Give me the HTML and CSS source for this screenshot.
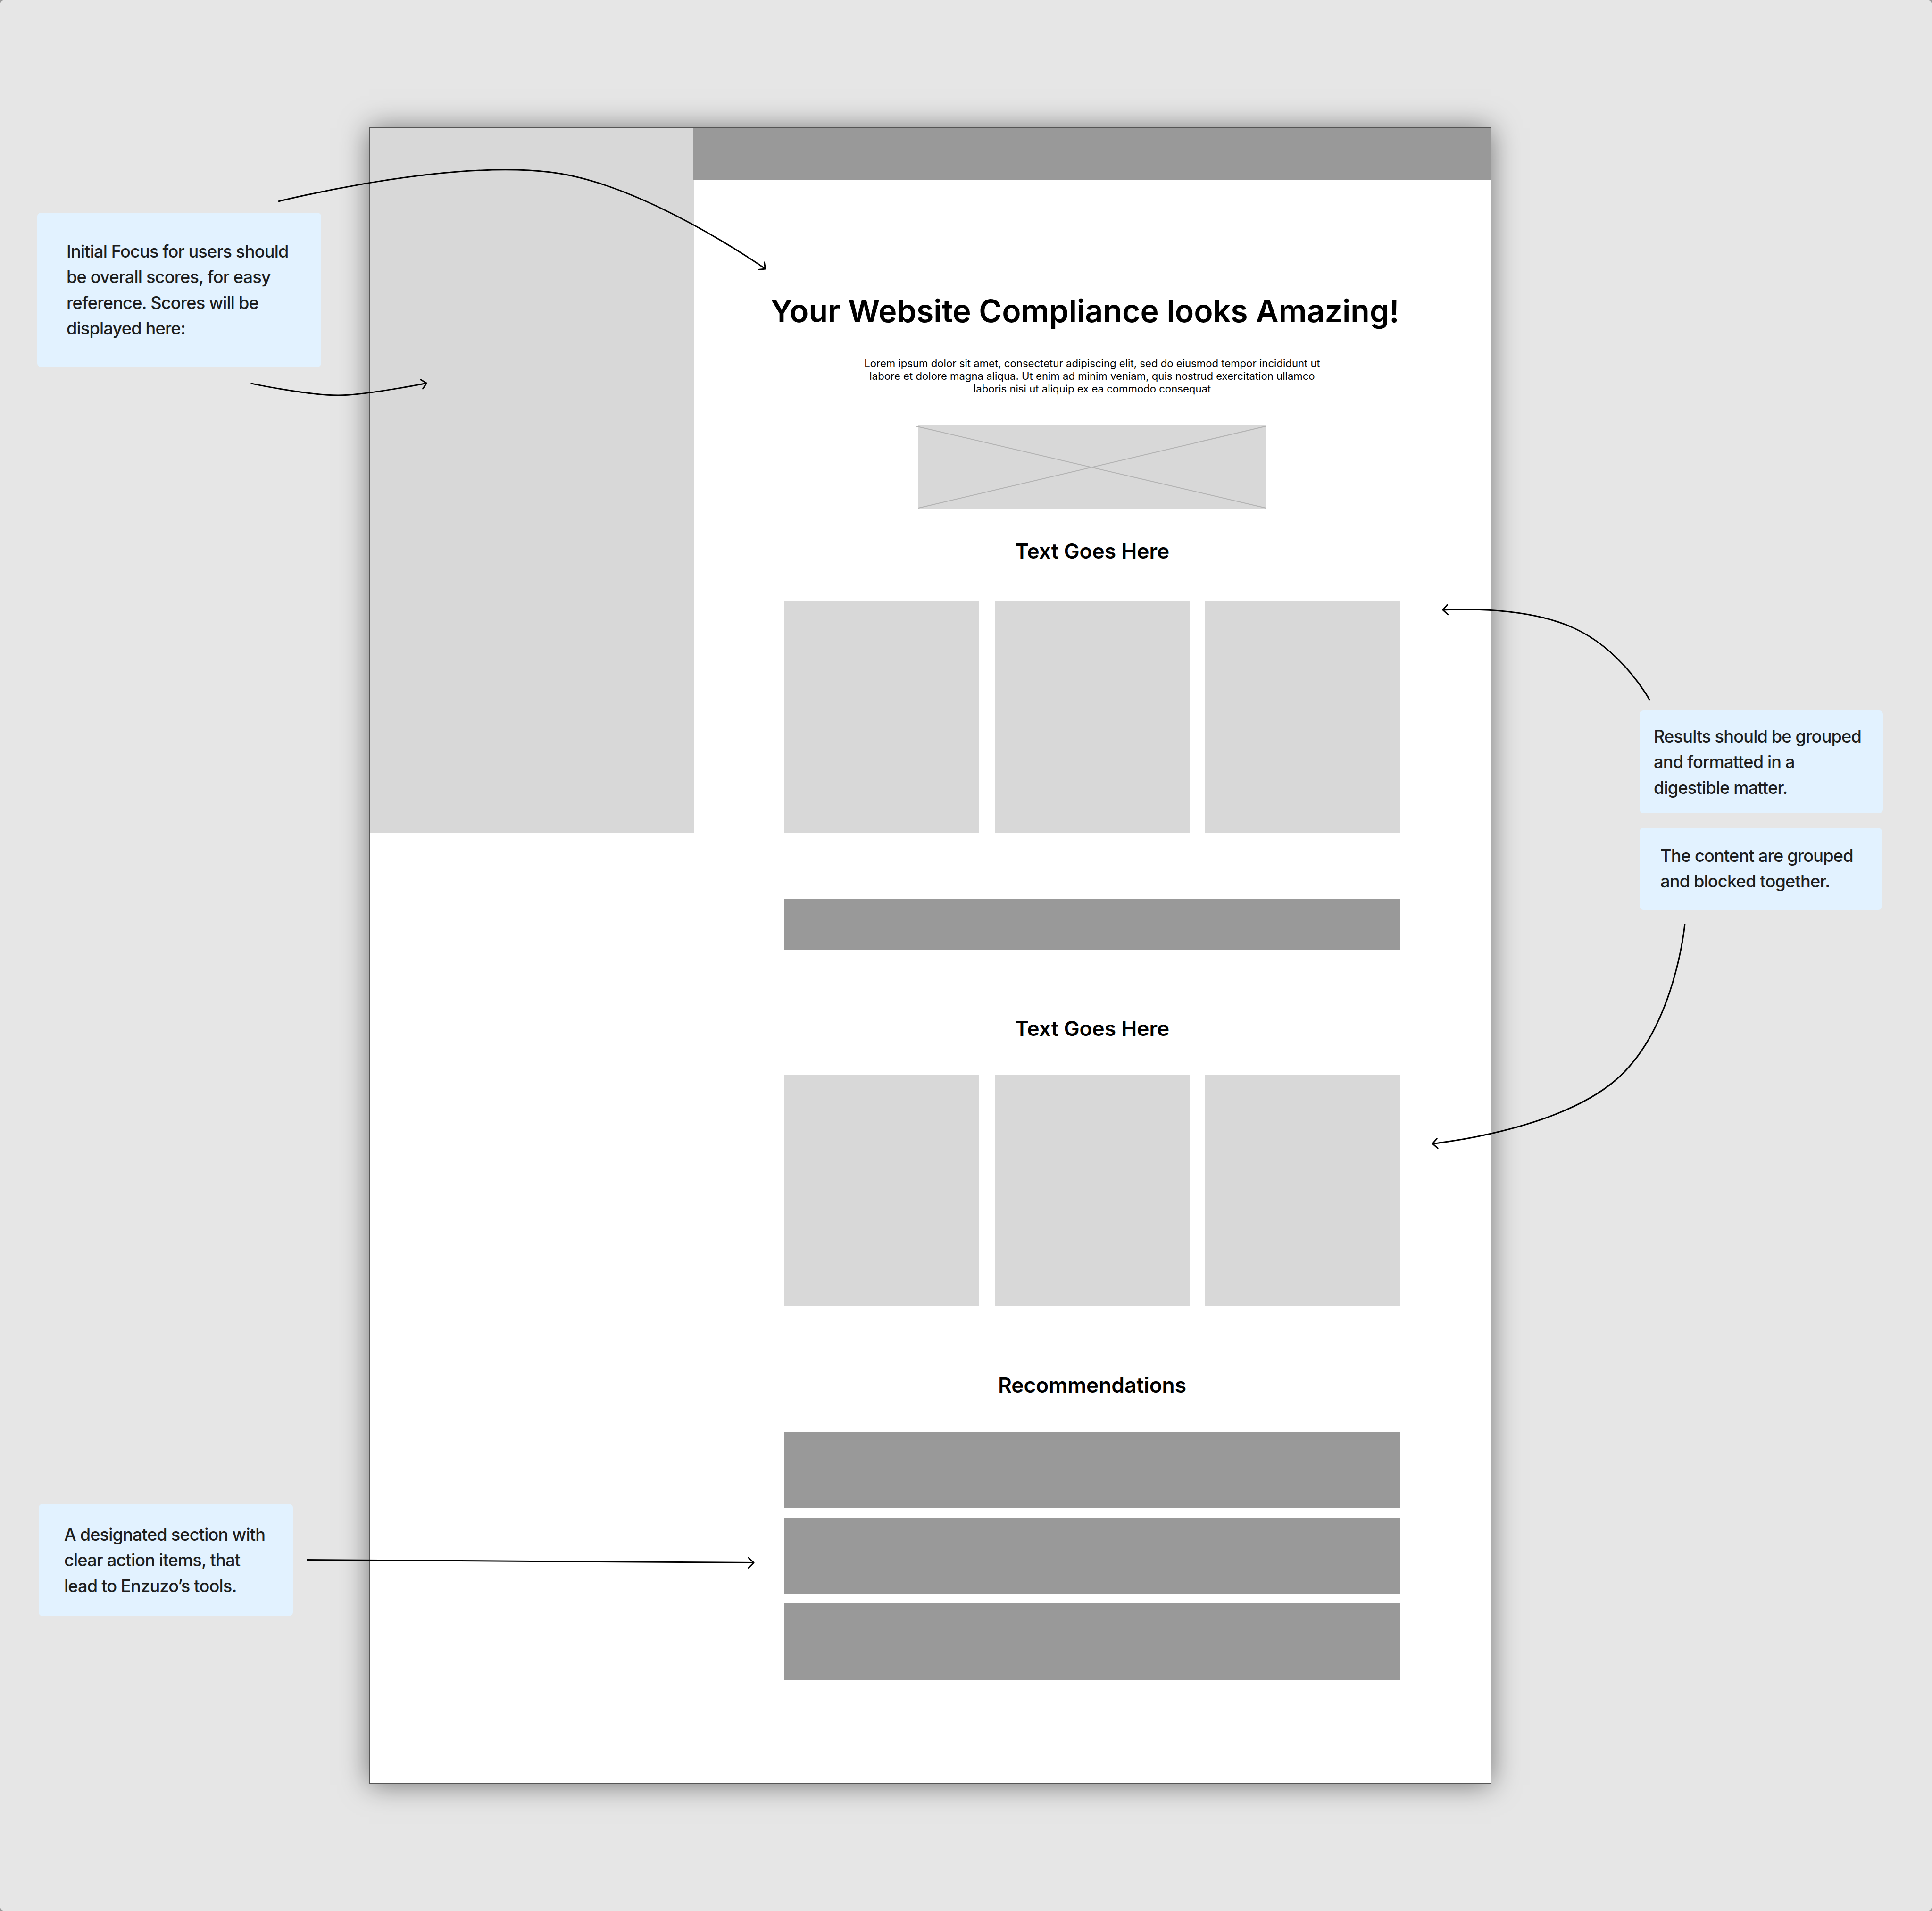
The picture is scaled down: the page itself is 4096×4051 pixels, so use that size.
FILE: index.html
```html
<!DOCTYPE html>
<html lang="en">
  <head>
    <meta charset="UTF-8" />
    <meta name="viewport" content="width=device-width, initial-scale=1.0" />
    <title>Compliance results wireframe</title>
    <link rel="stylesheet" href="styles.css">
  </head>
  <body>
    <div class="canvas">
      <div class="frame">
        <div class="sidebar"></div>
        <div class="main">
          <div class="header"></div>
          <div class="content">
            <h1>Your Website Compliance looks Amazing!</h1>
            <p class="intro">
              Lorem ipsum dolor sit amet, consectetur adipiscing elit, sed do eiusmod tempor incididunt ut<br />
              labore et dolore magna aliqua. Ut enim ad minim veniam, quis nostrud exercitation ullamco<br />
              laboris nisi ut aliquip ex ea commodo consequat
            </p>
            <svg class="placeholder" width="737" height="177" viewBox="0 0 737 177">
              <rect width="737" height="177" />
              <path d="M-5 2.5L737 176M737 2.5L0 176" />
            </svg>

            <h2>Text Goes Here</h2>
            <div class="cards">
              <div class="card"></div>
              <div class="card"></div>
              <div class="card"></div>
            </div>
            <div class="banner"></div>

            <h2>Text Goes Here</h2>
            <div class="cards second">
              <div class="card"></div>
              <div class="card"></div>
              <div class="card"></div>
            </div>

            <h2>Recommendations</h2>
            <div class="rows">
              <div class="row"></div>
              <div class="row"></div>
              <div class="row"></div>
            </div>
          </div>
        </div>
      </div>

      <!-- notes -->
      <div class="note note-focus">
        Initial Focus for users should<br />be overall scores, for easy<br />reference. Scores will be<br />displayed here:
      </div>
      <div class="note note-results">
        Results should be grouped<br />and formatted in a<br />digestible matter.
      </div>
      <div class="note note-content">
        The content are grouped<br />and blocked together.
      </div>
      <div class="note note-actions">
        A designated section with<br />clear action items, that<br />lead to Enzuzo’s tools.
      </div>

      <!-- arrows -->
      <svg class="arrows" width="4096" height="4051" viewBox="0 0 4096 4051">
        <path d="M590 427C590 427 942 338 1167 365C1367 389 1622.6 570 1622.6 570" />
        <path class="tip" d="M1620.4 556L1622.6 570L1608.5 571.5" />
        <path d="M531.5 812.6C531.5 812.6 650 838 717 838C775 838 904.5 812.2 904.5 812.2" />
        <path class="tip" d="M891.5 804.5L904.5 812.2L896.5 824" />
        <path d="M3497.4 1484.2C3497.4 1484.2 3442 1380 3337 1331.5C3227 1281 3059 1293 3059 1293" />
        <path class="tip" d="M3068.4 1282L3059 1293L3069.7 1302.7" />
        <path d="M3571.9 1958.9C3571.9 1958.9 3552 2180 3425 2290C3298 2398 3037 2424.4 3037 2424.4" />
        <path class="tip" d="M3046.3 2413.8L3037 2424.4L3048.2 2434.1" />
        <path d="M650.5 3306.5L1598 3312.5" />
        <path class="tip" d="M1587 3302L1598 3312.5L1587 3323.5" />
      </svg>
    </div>
  </body>
</html>
```
FILE: styles.css
```css
* {
  box-sizing: border-box;
}
body {
  margin: 0;
  background: #999;
  font-family: Inter, "Liberation Sans", sans-serif;
}
.canvas {
  position: relative;
  width: 4096px;
  height: 4051px;
  padding: 270px 0 0 783px;
  border-radius: 11px;
  background: #e6e6e6;
  overflow: hidden;
}

.frame {
  display: flex;
  align-items: flex-start;
  width: 2378px;
  height: 3511px;
  border: 1px solid #555;
  background: white;
  box-shadow: 0 2px 56px rgba(0, 0, 0, 0.5);
}
.sidebar {
  flex: none;
  width: 688px;
  height: 1494px;
  background: #d8d8d8;
}
.main {
  flex: 1;
  margin-left: -2px;
}
.header {
  height: 110px;
  background: #999;
}
.content {
  width: 1307px;
  margin-left: 192px;
  padding-top: 239px;
}

h1 {
  margin: 0 -11px 0 -42px;
  font-size: 66.3px;
  font-weight: 600;
  line-height: 78px;
  text-align: center;
  white-space: nowrap;
}
.intro {
  margin: 59px 0 64px;
  font-size: 22.15px;
  line-height: 26.8px;
  text-align: center;
  white-space: nowrap;
}
.placeholder {
  display: block;
  margin: 0 auto;
  overflow: visible;
}
.placeholder rect {
  fill: #d8d8d8;
}
.placeholder path {
  fill: none;
  stroke: #b3b3b3;
  stroke-width: 2;
}
h2 {
  margin: 64px 0 80px;
  font-size: 44.3px;
  font-weight: 600;
  line-height: 52px;
  text-align: center;
}

.cards {
  display: grid;
  grid-template-columns: repeat(3, 1fr);
  gap: 33px;
}
.card {
  height: 491px;
  background: #d8d8d8;
}
.banner {
  height: 107px;
  margin-top: 141px;
  background: #999;
}
.banner + h2 {
  margin: 141px 0 72px;
}
.second + h2 {
  margin: 141px 0 73px;
}
.rows {
  display: flex;
  flex-direction: column;
  gap: 20px;
}
.row {
  height: 162px;
  background: #999;
}

.note {
  position: absolute;
  border-radius: 8px;
  background: #e2f2ff;
  color: #1e1e1e;
  font-size: 36.2px;
  font-weight: 500;
  line-height: 54.3px;
  letter-spacing: -0.023em;
  white-space: nowrap;
}
.note-focus {
  left: 79px;
  top: 451px;
  width: 602px;
  height: 327px;
  padding: 55px 62px;
}
.note-results {
  left: 3476px;
  top: 1506px;
  width: 516px;
  height: 218px;
  padding: 28px 30px;
}
.note-content {
  left: 3476px;
  top: 1755px;
  width: 514px;
  height: 173px;
  padding: 32px 44px;
}
.note-actions {
  left: 82px;
  top: 3188px;
  width: 539px;
  height: 238px;
  padding: 38px 54px;
}

.arrows {
  position: absolute;
  left: 0;
  top: 0;
}
.arrows path {
  fill: none;
  stroke: black;
  stroke-width: 3;
}
.arrows .tip {
  stroke-linecap: round;
  stroke-linejoin: round;
}
```
